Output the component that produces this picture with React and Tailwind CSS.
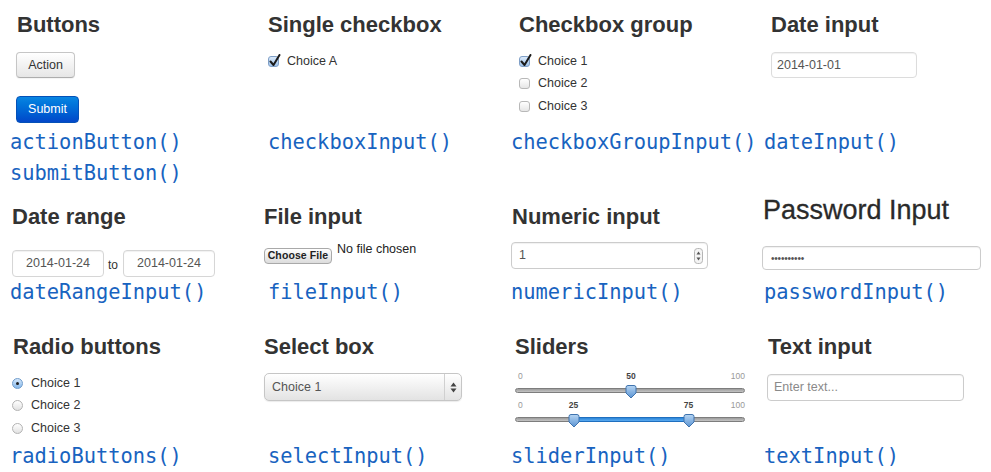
import React from 'react';

const Heading = ({ className = '', children }) => (
  <h2 className={`h-[26px] text-[22px] leading-[26px] font-bold text-[#333] whitespace-nowrap ${className}`}>{children}</h2>
);

const Code = ({ className = '', children }) => (
  <div className={`font-['DejaVu_Sans_Mono',monospace] text-[20.4px] leading-[31px] text-[#1863c0] whitespace-nowrap ${className}`}>
    {children}
  </div>
);

const Checkbox = ({ checked }) => (
  <span
    className={`relative inline-block w-[11px] h-[11px] shrink-0 rounded-[3px] border ${
      checked ? 'border-[#7f9fc7] bg-linear-to-b from-[#dbeafb] to-[#9fc3ea]' : 'border-[#b8b8b8] bg-linear-to-b from-white to-[#e6e6e6]'
    }`}
  >
    {checked && (
      <svg className="absolute -top-[3px] left-[0px]" width="12" height="13" viewBox="0 0 12 13">
        <path d="M1.5 7.5 L4.5 11 L10.5 1" stroke="#1b1b1b" strokeWidth="2" fill="none" strokeLinecap="round" strokeLinejoin="round" />
      </svg>
    )}
  </span>
);

const Radio = ({ checked }) => (
  <span
    className={`relative flex items-center justify-center w-[11px] h-[11px] shrink-0 rounded-full border ${
      checked ? 'border-[#6f9ccb] bg-linear-to-b from-[#d4e7fb] to-[#86b8ea]' : 'border-[#b3b3b3] bg-linear-to-b from-white to-[#e2e2e2]'
    }`}
  >
    {checked && <span className="w-[3px] h-[3px] rounded-full bg-[#1d1d1d]" />}
  </span>
);

const Choice = ({ children, box }) => (
  <div className="flex items-center h-[22.5px]">
    {box}
    <span className="ml-[8px] text-[12.5px] text-[#333]">{children}</span>
  </div>
);

const Handle = ({ left, top }) => (
  <svg className="absolute" style={{ left: left - 6, top }} width="12" height="14" viewBox="0 0 12 14">
    <defs>
      <linearGradient id="hg" x1="0" y1="0" x2="0" y2="1">
        <stop offset="0" stopColor="#b6d5f3" />
        <stop offset="1" stopColor="#5a93d2" />
      </linearGradient>
    </defs>
    <path d="M1 2.5 Q1 0.5 3 0.5 H9 Q11 0.5 11 2.5 V8 L6 13 L1 8 Z" fill="url(#hg)" stroke="#3f73ae" strokeWidth="1" />
  </svg>
);

const SliderLabel = ({ left, children }) => (
  <span className="absolute top-0 -translate-x-1/2 text-[8.5px] leading-[10px] text-[#444] font-bold" style={{ left }}>
    {children}
  </span>
);

const Slider = ({ values }) => {
  const px = (v) => (v / 100) * 230 + 1;
  return (
    <div className="relative w-[230px] h-[29px]">
      <span className="absolute top-0 left-[3px] text-[8.5px] leading-[10px] text-[#999]">0</span>
      <span className="absolute top-0 right-0 text-[8.5px] leading-[10px] text-[#999]">100</span>
      {values.map((v) => (
        <SliderLabel key={v} left={px(v)}>{v}</SliderLabel>
      ))}
      <div className="absolute top-[17px] left-0 right-0 h-[5px] rounded-full border border-[#7d7d7d] bg-linear-to-b from-[#9c9c9c] to-[#c4c4c4]" />
      {values.length === 2 && (
        <div
          className="absolute top-[17px] h-[5px] border-y border-[#1f6fbf] bg-linear-to-b from-[#2b86d8] to-[#5aaaf0]"
          style={{ left: px(values[0]), width: px(values[1]) - px(values[0]) }}
        />
      )}
      {values.map((v) => (
        <Handle key={v} left={px(v)} top={14} />
      ))}
    </div>
  );
};

const field = 'rounded-[4px] border bg-white shadow-[inset_0_1px_1px_rgba(0,0,0,0.06)]';

export default function App() {
  return (
    <div className="w-[991px] h-[472px] bg-white overflow-hidden font-['Liberation_Sans',Arial,sans-serif] grid grid-cols-[250px_250px_250px_241px] grid-rows-[190px_130px_152px]">
      {/* Row 1 */}
      <div className="flex flex-col pt-[12px]">
        <Heading className="ml-[17px]">Buttons</Heading>
        <div className="h-[89px] pl-[16px] flex flex-col items-start">
          <div className="mt-[14px] h-[26px] w-[59px] flex items-center justify-center rounded-[4px] border border-[#c6c6c6] border-b-[#adadad] bg-linear-to-b from-white to-[#e6e6e6] text-[12.5px] text-[#333] shadow-[0_1px_1px_rgba(0,0,0,0.05)]">
            Action
          </div>
          <div className="mt-[18px] h-[27px] w-[63px] flex items-center justify-center rounded-[4px] border border-[#0451b8] bg-linear-to-b from-[#0a86e2] to-[#0447c9] text-[12.5px] text-white">
            Submit
          </div>
        </div>
        <Code className="pl-[10px]">
          actionButton()
          <br />
          submitButton()
        </Code>
      </div>

      <div className="flex flex-col pt-[12px]">
        <Heading className="ml-[18px]">Single checkbox</Heading>
        <div className="h-[89px] pl-[18px] pt-[12px]">
          <Choice box={<Checkbox checked />}>Choice A</Choice>
        </div>
        <Code className="pl-[18px]">checkboxInput()</Code>
      </div>

      <div className="flex flex-col pt-[12px]">
        <Heading className="ml-[19px]">Checkbox group</Heading>
        <div className="h-[89px] pl-[19px] pt-[12px]">
          <Choice box={<Checkbox checked />}>Choice 1</Choice>
          <Choice box={<Checkbox />}>Choice 2</Choice>
          <Choice box={<Checkbox />}>Choice 3</Choice>
        </div>
        <Code className="pl-[11px]">checkboxGroupInput()</Code>
      </div>

      <div className="flex flex-col pt-[12px]">
        <Heading className="ml-[21px]">Date input</Heading>
        <div className="h-[89px] pl-[21px]">
          <div className={`mt-[14px] h-[26px] w-[146px] px-[5px] leading-[24px] text-[12.5px] text-[#555] border-[#dcdcdc] ${field}`}>
            2014-01-01
          </div>
        </div>
        <Code className="pl-[14px]">dateInput()</Code>
      </div>

      {/* Row 2 */}
      <div className="flex flex-col pt-[14px]">
        <Heading className="ml-[12px]">Date range</Heading>
        <div className="h-[47px] pl-[12px] pt-[12px] flex items-end">
          <div className={`h-[27px] w-[92px] flex items-center justify-center text-[12.5px] text-[#555] border-[#d6d6d6] ${field}`}>
            2014-01-24
          </div>
          <span className="ml-[4px] mr-[5px] mb-[6px] text-[12px] leading-[12px] text-[#333]">to</span>
          <div className={`h-[27px] w-[92px] flex items-center justify-center text-[12.5px] text-[#555] border-[#d6d6d6] ${field}`}>
            2014-01-24
          </div>
        </div>
        <Code className="pl-[10px]">dateRangeInput()</Code>
      </div>

      <div className="flex flex-col pt-[14px]">
        <Heading className="ml-[14px]">File input</Heading>
        <div className="h-[47px] pl-[14px] pt-[12px] flex items-start">
          <div className="mt-[6px] h-[16px] w-[68px] flex items-center justify-center rounded-[4px] border border-[#a9a9a9] bg-linear-to-b from-white to-[#dcdcdc] text-[10.5px] font-bold text-[#222] tracking-[0.1px]">
            Choose File
          </div>
          <span className="ml-[5px] text-[12.5px] leading-[15px] text-[#222]">No file chosen</span>
        </div>
        <Code className="pl-[18px]">fileInput()</Code>
      </div>

      <div className="flex flex-col pt-[14px]">
        <Heading className="ml-[12px]">Numeric input</Heading>
        <div className="h-[47px] pl-[11px] pt-[12px]">
          <div className={`h-[27px] w-[197px] pl-[7px] pr-[4px] flex items-center justify-between text-[12.5px] text-[#555] border-[#cccccc] ${field}`}>
            <span>1</span>
            <svg width="9" height="16" viewBox="0 0 9 16">
              <rect x="0.5" y="0.5" width="8" height="15" rx="3" fill="#f4f4f4" stroke="#b5b5b5" />
              <path d="M2.5 6.5 L4.5 3.5 L6.5 6.5 Z" fill="#555" />
              <path d="M2.5 9.5 L4.5 12.5 L6.5 9.5 Z" fill="#555" />
            </svg>
          </div>
        </div>
        <Code className="pl-[11px]">numericInput()</Code>
      </div>

      <div className="flex flex-col pt-[14px]">
        <h2 className="ml-[13px] -mt-[7px] mb-[7px] h-[26px] text-[27px] leading-[26px] font-normal text-[#2a2a2a] whitespace-nowrap [-webkit-text-stroke:0.3px_#2a2a2a]">
          Password Input
        </h2>
        <div className="h-[47px] pl-[12px] pt-[16px]">
          <div className={`h-[24px] w-[219px] pl-[8px] flex items-center text-[10px] text-[#555] tracking-[-0.2px] border-[#cccccc] ${field}`}>
            ••••••••••
          </div>
        </div>
        <Code className="pl-[14px]">passwordInput()</Code>
      </div>

      {/* Row 3 */}
      <div className="flex flex-col pt-[14px]">
        <Heading className="ml-[13px]">Radio buttons</Heading>
        <div className="h-[81px] pl-[12px] pt-[12px]">
          <Choice box={<Radio checked />}>Choice 1</Choice>
          <Choice box={<Radio />}>Choice 2</Choice>
          <Choice box={<Radio />}>Choice 3</Choice>
        </div>
        <Code className="pl-[10px]">radioButtons()</Code>
      </div>

      <div className="flex flex-col pt-[14px]">
        <Heading className="ml-[14px]">Select box</Heading>
        <div className="h-[81px] pl-[14px] pt-[13px]">
          <div className="h-[28px] w-[198px] flex rounded-[5px] border border-[#c6c6c6] bg-linear-to-b from-white to-[#e3e3e3] shadow-[0_1px_1px_rgba(0,0,0,0.08)] text-[12.5px] text-[#555]">
            <span className="flex-1 pl-[7px] flex items-center">Choice 1</span>
            <span className="w-[17px] border-l border-[#d0d0d0] flex items-center justify-center">
              <svg width="7" height="11" viewBox="0 0 7 11">
                <path d="M0.5 4.5 L3.5 0.5 L6.5 4.5 Z" fill="#444" />
                <path d="M0.5 6.5 L3.5 10.5 L6.5 6.5 Z" fill="#444" />
              </svg>
            </span>
          </div>
        </div>
        <Code className="pl-[18px]">selectInput()</Code>
      </div>

      <div className="flex flex-col pt-[14px]">
        <Heading className="ml-[15px]">Sliders</Heading>
        <div className="h-[81px] pl-[15px] pt-[11px]">
          <Slider values={[50]} />
          <Slider values={[25, 75]} />
        </div>
        <Code className="pl-[11px]">sliderInput()</Code>
      </div>

      <div className="flex flex-col pt-[14px]">
        <Heading className="ml-[18px]">Text input</Heading>
        <div className="h-[81px] pl-[17px] pt-[14px]">
          <div className={`h-[27px] w-[197px] pl-[6px] flex items-center text-[12.5px] text-[#8a8a8a] border-[#cccccc] ${field}`}>
            Enter text...
          </div>
        </div>
        <Code className="pl-[14px]">textInput()</Code>
      </div>
    </div>
  );
}
